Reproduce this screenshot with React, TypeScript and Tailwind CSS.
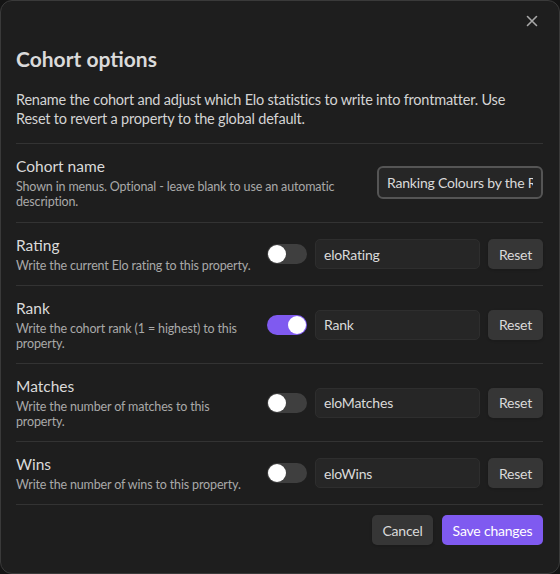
import { useState } from 'react';

const font = { fontFamily: 'Lato, "Noto Sans", sans-serif' };

type Prop = { key: string; name: string; desc: string; value: string; on: boolean };

const initial: Prop[] = [
  { key: 'rating', name: 'Rating', desc: 'Write the current Elo rating to this property.', value: 'eloRating', on: false },
  { key: 'rank', name: 'Rank', desc: 'Write the cohort rank (1 = highest) to this property.', value: 'Rank', on: true },
  { key: 'matches', name: 'Matches', desc: 'Write the number of matches to this property.', value: 'eloMatches', on: false },
  { key: 'wins', name: 'Wins', desc: 'Write the number of wins to this property.', value: 'eloWins', on: false },
];

const Toggle = ({ on, onClick }: { on: boolean; onClick: () => void }) => (
  <button
    onClick={onClick}
    className={`flex h-[20px] w-[40px] shrink-0 items-center rounded-full px-[1px] ${on ? 'justify-end bg-[#7f5af0]' : 'justify-start bg-[#3f3f3f]'}`}
  >
    <span className="h-[18px] w-[18px] rounded-full bg-white" />
  </button>
);

const App = () => {
  const [props, setProps] = useState(initial);
  const [name, setName] = useState('Ranking Colours by the Rank');

  const toggle = (key: string) =>
    setProps(props.map((p) => (p.key === key ? { ...p, on: !p.on } : p)));

  return (
    <div className="h-[574px] w-[560px] bg-[#141414]" style={font}>
      <div className="relative h-[574px] w-[560px] rounded-xl border border-[#3a3a3a] bg-[#1e1e1e] pl-[15px] pr-[16px] pt-[43px] text-[#dadada]">
        {/* close button */}
        <button className="absolute right-[21px] top-[14px] text-[#a8a8a8]">
          <svg width="12" height="12" viewBox="0 0 12 12" fill="none" stroke="currentColor" strokeWidth="1.6" strokeLinecap="round">
            <path d="M1.5 1.5l9 9M10.5 1.5l-9 9" />
          </svg>
        </button>

        <h1 className="text-[21px] font-bold leading-[30px] text-[#dadada]">Cohort options</h1>
        <p className="mt-[16px] max-w-[500px] pb-[15px] text-[14.5px] leading-[19px] tracking-[-0.2px] text-[#d4d4d4]">
          Rename the cohort and adjust which Elo statistics to write into frontmatter. Use Reset to revert a property to the global default.
        </p>

        {/* cohort name */}
        <div className="flex items-center gap-4 border-t border-[#333] pb-[13px] pt-[12px]">
          <div className="flex-1">
            <div className="text-[15.5px] leading-[20px]">Cohort name</div>
            <div className="mt-[3px] text-[12.5px] leading-[15px] tracking-[-0.15px] text-[#a9a9a9]">
              Shown in menus. Optional - leave blank to use an automatic description.
            </div>
          </div>
          <input
            value={name}
            onChange={(e) => setName(e.target.value)}
            className="h-[33px] w-[166px] rounded-md border-2 border-[#555] bg-[#262626] px-[8px] text-[14px] tracking-[-0.2px] text-[#dadada] outline-none"
            style={font}
          />
        </div>

        {props.map((p) => (
          <div key={p.key} className="flex items-center gap-2 border-t border-[#333] py-[12px]">
            <div className="flex-1 pr-[4px]">
              <div className="text-[15.5px] leading-[20px]">{p.name}</div>
              <div className="mt-[3px] text-[12.5px] leading-[15px] tracking-[-0.15px] text-[#a9a9a9]">{p.desc}</div>
            </div>
            <Toggle on={p.on} onClick={() => toggle(p.key)} />
            <input
              value={p.value}
              onChange={(e) => setProps(props.map((q) => (q.key === p.key ? { ...q, value: e.target.value } : q)))}
              className="h-[30px] w-[165px] rounded-[5px] border border-[#2e2e2e] bg-[#262626] px-[8px] text-[14px] tracking-[-0.2px] text-[#dadada] outline-none"
              style={font}
            />
            <button className="h-[30px] w-[55px] rounded-[5px] bg-[#363636] text-[14px] tracking-[-0.2px] text-[#dadada] shadow-sm">
              Reset
            </button>
          </div>
        ))}

        {/* footer */}
        <div className="flex justify-end gap-[9px] border-t border-[#333] pt-[10px]">
          <button className="h-[30px] w-[61px] rounded-[5px] bg-[#363636] text-[14px] tracking-[-0.2px] text-[#dadada] shadow-sm">Cancel</button>
          <button className="h-[30px] w-[101px] rounded-[5px] bg-[#7f5af0] text-[14px] tracking-[-0.2px] text-white">Save changes</button>
        </div>
      </div>
    </div>
  );
};

export default App;
